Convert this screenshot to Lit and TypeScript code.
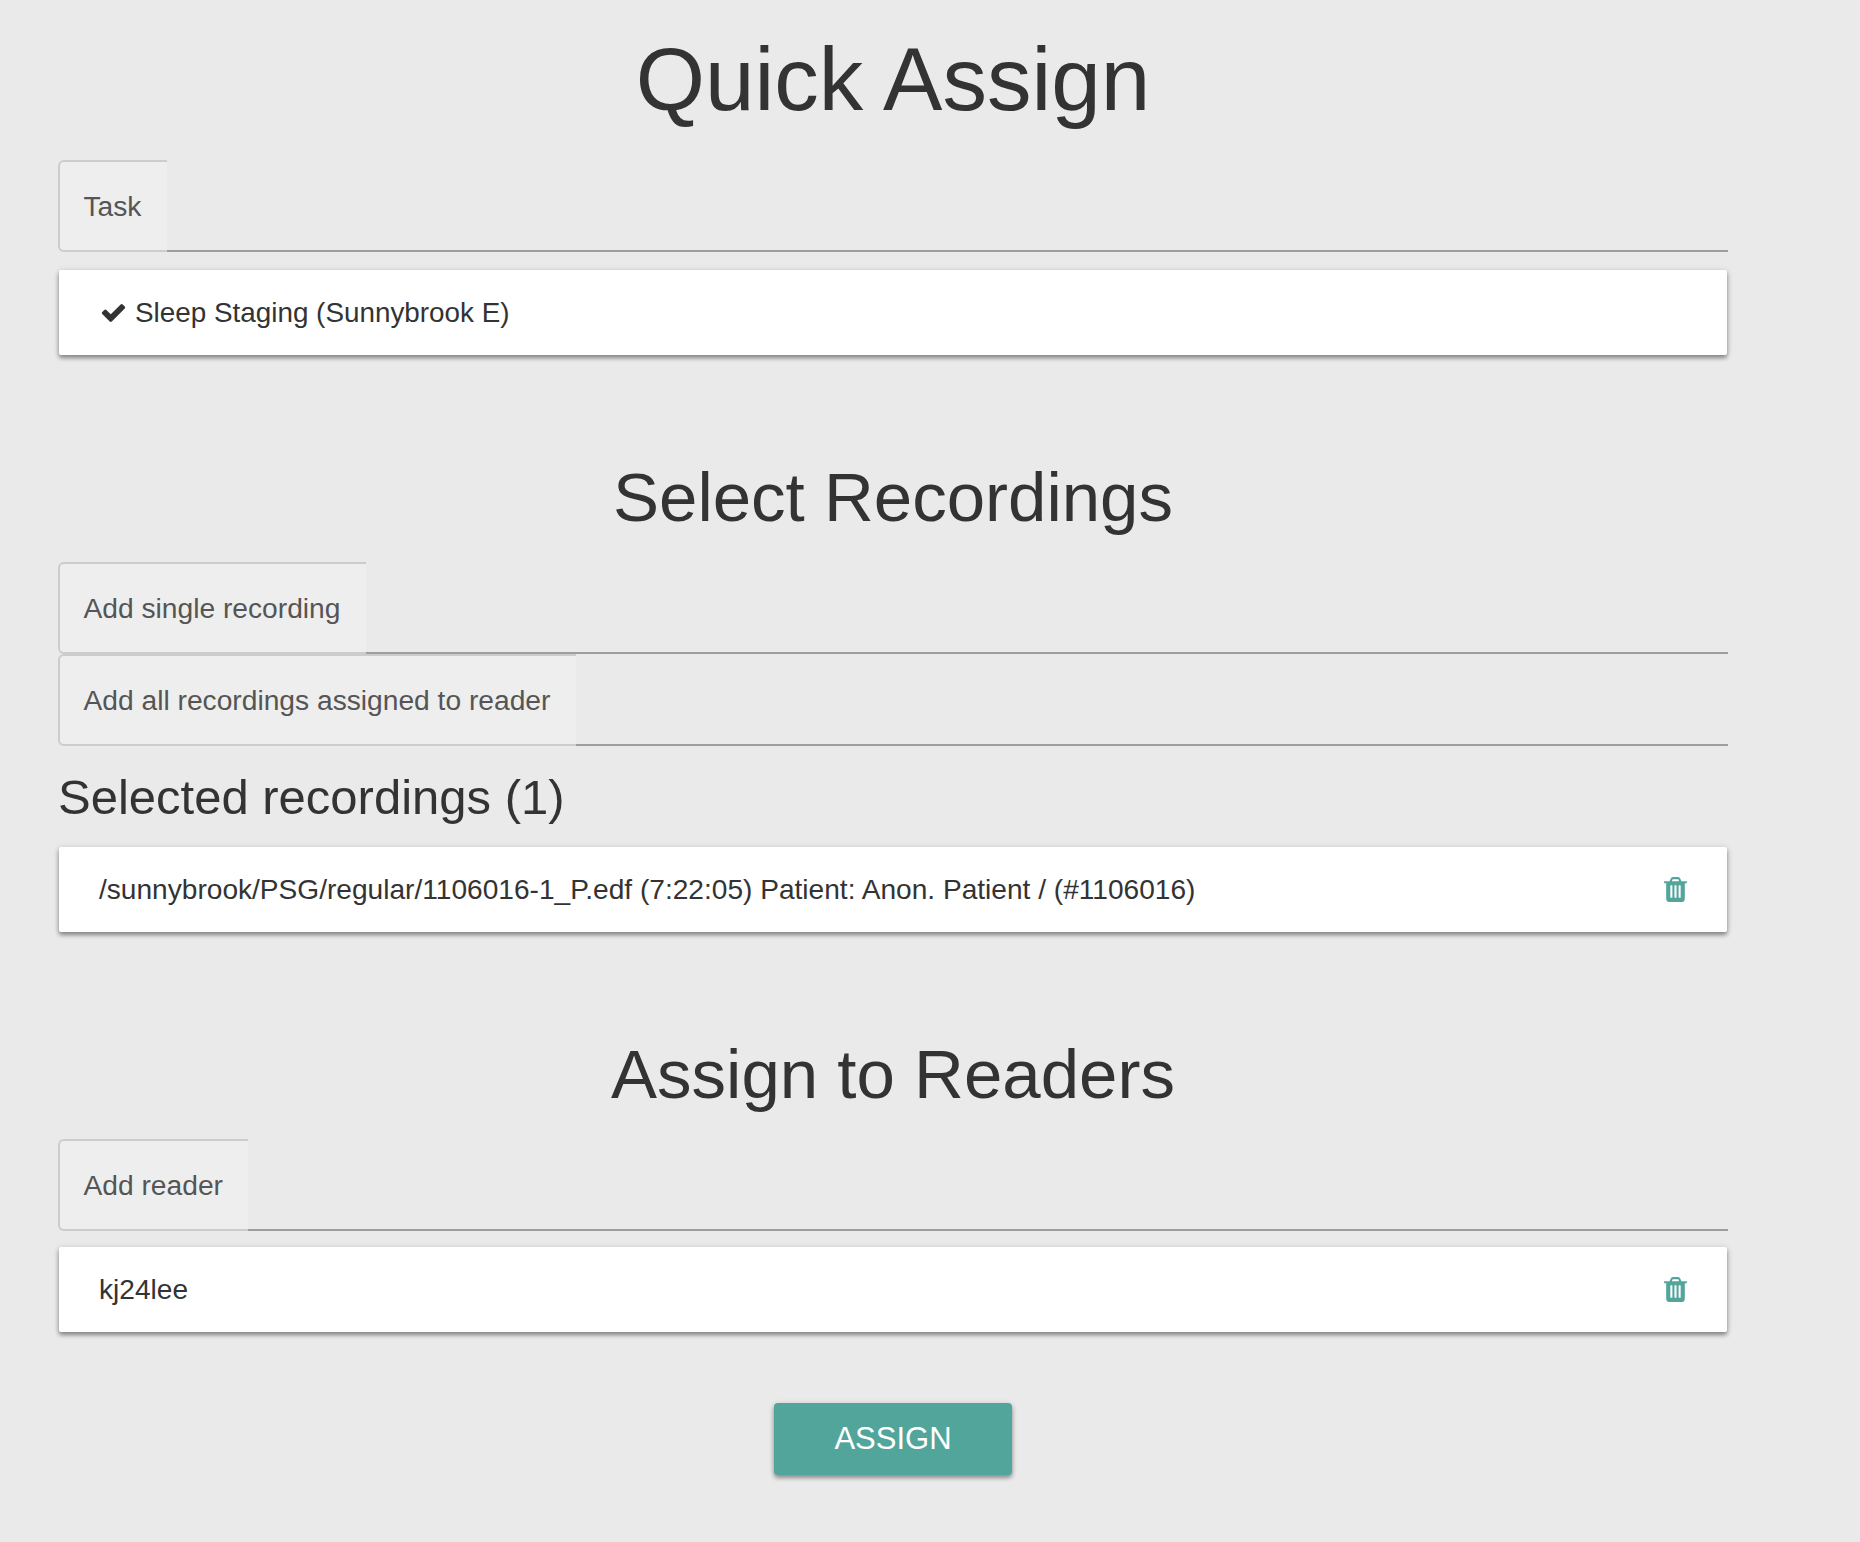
import { LitElement, html, css, svg } from 'lit';
import { customElement } from 'lit/decorators.js';

const checkIcon = svg`<path d="M1671 566q0 40-28 68l-724 724-136 136q-28 28-68 28t-68-28l-136-136-362-362q-28-28-28-68t28-68l136-136q28-28 68-28t68 28l294 295 656-657q28-28 68-28t68 28l136 136q28 28 28 68z"/>`;
const trashIcon = svg`<path d="M704 1376v-704q0-14-9-23t-23-9h-64q-14 0-23 9t-9 23v704q0 14 9 23t23 9h64q14 0 23-9t9-23zm256 0v-704q0-14-9-23t-23-9h-64q-14 0-23 9t-9 23v704q0 14 9 23t23 9h64q14 0 23-9t9-23zm256 0v-704q0-14-9-23t-23-9h-64q-14 0-23 9t-9 23v704q0 14 9 23t23 9h64q14 0 23-9t9-23zm-544-992h448l-48-117q-7-9-17-11h-317q-10 2-17 11zm928 32v64q0 14-9 23t-23 9h-96v948q0 83-47 143.500t-113 60.500h-832q-66 0-113-58.500t-47-141.500v-952h-96q-14 0-23-9t-9-23v-64q0-14 9-23t23-9h309l70-167q15-37 54-63t79-26h320q40 0 79 26t54 63l70 167h309q14 0 23 9t9 23z"/>`;

@customElement('app-root')
export class AppRoot extends LitElement {
  static styles = css`
    :host {
      display: block;
      min-height: 1542px;
      background: #eaeaea;
      font-family: 'Liberation Sans', Arial, sans-serif;
      color: #333;
      overflow: hidden;
    }
    .page {
      width: 1670px;
      margin-left: 58px;
      display: flex;
      flex-direction: column;
    }
    h1, h2, h3 {
      margin: 0;
      font-weight: 400;
      color: #333;
    }
    h1 {
      font-size: 89px;
      line-height: 100px;
      text-align: center;
      margin: 29px 0 31px;
    }
    h2 {
      font-size: 69px;
      line-height: 80px;
      text-align: center;
    }
    h3 {
      font-size: 49px;
      line-height: 60px;
      margin: 21px 0 20px;
    }
    .recordings-title { margin-top: 103px; margin-bottom: 24px; }
    .readers-title { margin-top: 103px; margin-bottom: 24px; }

    .input-row {
      display: flex;
      height: 92px;
      box-sizing: border-box;
    }
    .addon {
      display: flex;
      align-items: center;
      box-sizing: border-box;
      padding: 1px 25.5px 0 23.5px;
      background: #eee;
      color: #555;
      font-size: 28.2px;
      border: 2px solid #ccc;
      border-right: 0;
      border-radius: 6px 0 0 6px;
    }
    .line {
      flex: 1;
      border-bottom: 2px solid #9e9e9e;
    }
    .card {
      display: flex;
      align-items: center;
      justify-content: space-between;
      box-sizing: border-box;
      height: 85px;
      margin: 0 1px;
      padding: 0 37px 0 40px;
      background: #fff;
      border-radius: 2px;
      font-size: 28.1px;
      color: #333;
      box-shadow: 0 3px 4px 0 rgba(0, 0, 0, 0.38), 0 1px 7px 0 rgba(0, 0, 0, 0.14);
    }
    .task-card { margin-top: 18px; }
    .reader-card { margin-top: 16px; }
    .label {
      display: flex;
      align-items: center;
      gap: 8px;
      margin-left: 1px;
      font-size: 27.85px;
    }
    .check {
      width: 27px;
      height: 27px;
      fill: #333;
    }
    .trash {
      width: 29px;
      height: 29px;
      fill: #52a59a;
    }
    .actions {
      display: flex;
      justify-content: center;
      margin-top: 71px;
    }
    button {
      width: 238px;
      height: 72px;
      border: 0;
      border-radius: 4px;
      background: #52a59a;
      color: #fff;
      font-family: inherit;
      font-size: 31px;
      box-shadow: 0 3px 4px 0 rgba(0, 0, 0, 0.35), 0 1px 6px 0 rgba(0, 0, 0, 0.12);
    }
  `;

  private inputRow(label: string) {
    return html`<div class="input-row"><span class="addon">${label}</span><span class="line"></span></div>`;
  }

  private icon(cls: string, path: unknown) {
    return html`<svg class=${cls} viewBox="0 0 1792 1792">${path}</svg>`;
  }

  render() {
    return html`
      <div class="page">
        <h1>Quick Assign</h1>
        ${this.inputRow('Task')}
        <div class="card task-card">
          <span class="label">${this.icon('check', checkIcon)}Sleep Staging (Sunnybrook E)</span>
        </div>

        <h2 class="recordings-title">Select Recordings</h2>
        ${this.inputRow('Add single recording')}
        ${this.inputRow('Add all recordings assigned to reader')}
        <h3>Selected recordings (1)</h3>
        <div class="card">
          <span>/sunnybrook/PSG/regular/1106016-1_P.edf (7:22:05) Patient: Anon. Patient / (#1106016)</span>
          ${this.icon('trash', trashIcon)}
        </div>

        <h2 class="readers-title">Assign to Readers</h2>
        ${this.inputRow('Add reader')}
        <div class="card reader-card">
          <span>kj24lee</span>
          ${this.icon('trash', trashIcon)}
        </div>

        <div class="actions"><button>ASSIGN</button></div>
      </div>
    `;
  }
}
